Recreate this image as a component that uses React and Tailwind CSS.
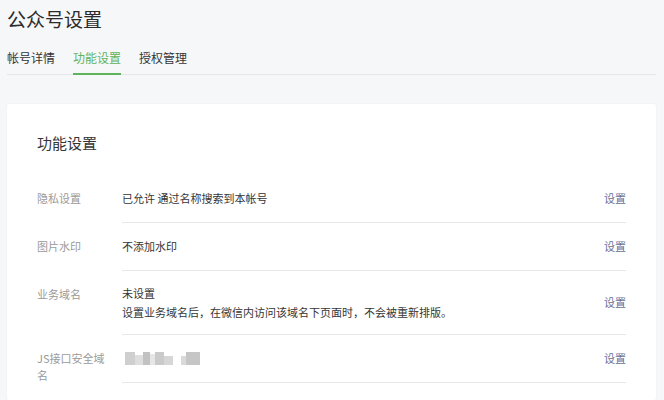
const tabs = ['帐号详情', '功能设置', '授权管理'];

const rows = [
  { label: '隐私设置', value: ['已允许 通过名称搜索到本帐号'], h: 'h-12' },
  { label: '图片水印', value: ['不添加水印'], h: 'h-12' },
  {
    label: '业务域名',
    value: ['未设置', '设置业务域名后，在微信内访问该域名下页面时，不会被重新排版。'],
    h: 'h-16',
  },
  { label: 'JS接口安全域名', masked: true, h: 'h-12' },
];

// pixelated blur over the real domain
function Masked() {
  return (
    <div className="ml-[3px] flex items-center gap-[8px] blur-[0.6px]">
      <div className="flex h-[13px] items-stretch">
        <div className="w-[10px] bg-[#cfcfcf]" />
        <div className="mt-[3px] w-[8px] bg-[#dedede]" />
        <div className="w-[7px] bg-[#c2c2c2]" />
        <div className="mt-[2px] w-[5px] bg-[#e6e6e6]" />
        <div className="w-[9px] bg-[#cacaca]" />
        <div className="mt-[4px] w-[9px] bg-[#d6d6d6]" />
      </div>
      <div className="flex h-[13px] items-stretch">
        <div className="mt-[4px] w-[5px] bg-[#dadada]" />
        <div className="w-[14px] bg-[#c6c6c6]" />
      </div>
    </div>
  );
}

export default function App() {
  return (
    <div
      className="h-[400px] overflow-hidden bg-[#f6f7f9] pl-[7px] pr-[8px]"
      style={{ fontFamily: '"Noto Sans CJK SC", "Noto Sans", sans-serif' }}
    >
      <h1 className="pt-[6px] text-[19px] leading-[26px] text-[#2b2b2b] font-normal">
        公众号设置
      </h1>

      {/* Tabs */}
      <div className="mt-[16px] flex gap-[18px] border-b border-[#e4e6e9]">
        {tabs.map((t, i) => (
          <div
            key={t}
            className={
              i === 1
                ? '-mb-px border-b-2 border-[#5fb35b] pb-[5px] text-[12px] leading-[20px] text-[#5fb35b]'
                : '-mb-px border-b-2 border-transparent pb-[5px] text-[12px] leading-[20px] text-[#353535]'
            }
          >
            {t}
          </div>
        ))}
      </div>

      {/* Card */}
      <div className="mt-[29px] rounded-[2px] bg-white px-[30px] pt-[29px] pb-[17px] shadow-[0_0_2px_rgba(0,0,0,0.06)]">
        <h2 className="text-[15px] leading-[20px] text-[#353535] font-normal">功能设置</h2>

        <div className="mt-[22px]">
          {rows.map((r) => (
            <div key={r.label} className={`flex ${r.h}`}>
              <div className="w-[85px] shrink-0 pt-[15px]">
                <div className="w-[68px] text-[11px] leading-[17px] text-[#9a9a9a]">{r.label}</div>
              </div>
              <div className="flex flex-1 items-center border-b border-[#e8e8e8]">
                <div className="flex-1 text-[11px] leading-[19px] text-[#353535]">
                  {r.masked ? <Masked /> : r.value.map((v) => <div key={v}>{v}</div>)}
                </div>
                <a className="text-[11px] leading-[19px] text-[#6b6f95]">设置</a>
              </div>
            </div>
          ))}
        </div>
      </div>
    </div>
  );
}
